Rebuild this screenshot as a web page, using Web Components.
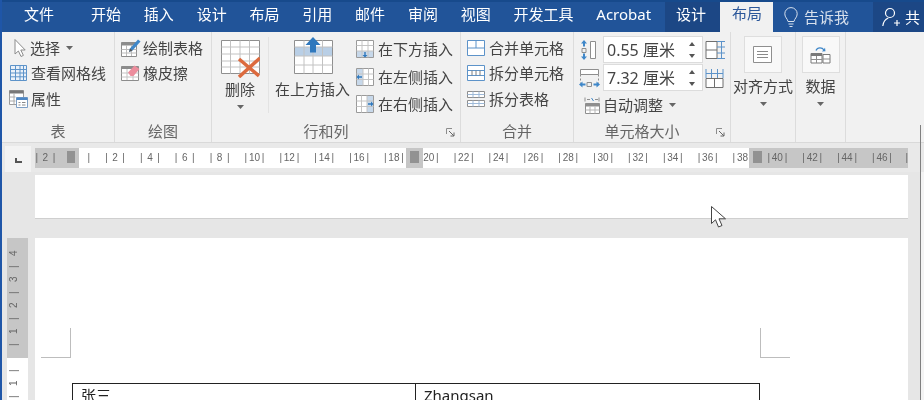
<!DOCTYPE html>
<html lang="zh">
<head>
<meta charset="utf-8">
<title>Word</title>
<style>
  html, body { margin: 0; padding: 0; background: #fff; }
  body { width: 924px; height: 400px; overflow: hidden; font-family: "Noto Sans CJK SC", "Noto Sans", sans-serif; }
  svg { display: block; }
</style>
</head>
<body>

<word-app>
  <tab-bar slot="tabs"></tab-bar>

  <ribbon-bar slot="ribbon">
    <ribbon-group label="表" style="--w:113px">
      <tool-col style="--pad:0 0 0 7px">
        <tool-btn caret style="--gap:2px">
          <svg slot="icon" width="19" height="20" viewBox="0 0 19 20"><path d="M6 1.500V16l3.400-3 2.600 5.500 2.400-1.100-2.600-5.400h4.400z" fill="#fff" stroke="#8c8c8c"/></svg>选择</tool-btn>
        <tool-btn>
          <svg slot="icon" width="19" height="18" viewBox="0 0 19 18"><path d="M1.500 1.500h16v15h-16z" fill="#eaf1f9" stroke="#5d93c9"/><path d="M1.500 5.500h16M1.500 9h16M1.500 12.800h16M6.500 1.500v15M11 1.500v15M14.500 1.500v15" stroke="#5d93c9" fill="none"/></svg>查看网格线</tool-btn>
        <tool-btn>
          <svg slot="icon" width="19" height="20" viewBox="0 0 19 20"><path d="M.5 1.500h14v14H.5z" fill="#fff" stroke="#9a9a9a"/><path d="M.5 1.500h14v3H.5z" fill="#777"/><path d="M.5 8h6M.5 12h6M5 4.500v11" stroke="#aaa"/><path d="M7.500 8.500h11v10h-11z" fill="#fff" stroke="#7d9ec4"/><path d="M7.500 8.500h11v2.500h-11z" fill="#4c86c4"/><path d="M9.500 13.500h2M13 13.500h3.500M9.500 16h2M13 16h3.500" stroke="#888"/></svg>属性</tool-btn>
      </tool-col>
    </ribbon-group>

    <ribbon-group label="绘图" style="--w:97px">
      <tool-col style="--pad:0 0 0 6px">
        <tool-btn style="--gap:2px">
          <svg slot="icon" width="20" height="20" viewBox="0 0 20 20"><path d="M.5 4.500h15v14H.5z" fill="#fff" stroke="#8c8c8c"/><path d="M.5 4.500h15v3H.5z" fill="#8c8c8c"/><path d="M.5 11.500h15M.5 15h15M5.500 7v11M10.500 7v11" stroke="#bbb"/><path d="M8 14l1-3.500L17 1.500l2.500 2-8 9z" fill="#3f87c9"/><path d="M8 14l1-3.500 2.500 2z" fill="#555"/></svg>绘制表格</tool-btn>
        <tool-btn style="--gap:2px">
          <svg slot="icon" width="20" height="18" viewBox="0 0 20 18"><path d="M.5 2.500h17v14H.5z" fill="#fff" stroke="#8c8c8c"/><path d="M.5 2.500h17v2.500H.5z" fill="#8c8c8c"/><path d="M.5 9h17M.5 13h17M6 5v11M12 5v11" stroke="#c4c4c4"/><path d="M7 8.500L13.500 1.500l5 3.500-6 7h-3z" fill="#ec8d9d"/></svg>橡皮擦</tool-btn>
      </tool-col>
    </ribbon-group>

    <ribbon-group label="行和列" launcher style="--w:249px">
      <tool-big caret style="--w:56px;--top:8px;--tgap:1px">
        <svg slot="icon" width="40" height="38" viewBox="0 0 40 38"><path d="M1.500 .5h38v33h-38z" fill="#fff" stroke="#8f8f8f"/><path d="M1.500 7h38M1.500 14h38M1.500 21h38M1.500 27h38M10.500 .5v33M20 .5v33M29.500 .5v33" stroke="#c2c2c2" fill="none"/><path d="M19 19l20 17M40 18L19 37" stroke="#dc6a3e" stroke-width="3.500"/></svg>删除</tool-big>
      <i style="display:block;width:1px;height:76px;margin-top:5px;background:#e3e3e3"></i>
      <tool-big style="--w:87px;--top:5px;--tgap:4px">
        <svg slot="icon" width="40" height="38" viewBox="0 0 40 38"><path d="M1.500 3.500h38v33h-38z" fill="#fff" stroke="#8f8f8f"/><path d="M2 10h37v9H2z" fill="#b9cfe6"/><path d="M1.500 10h38M1.500 19h38M1.500 28h38M11 3.500v33M20 3.500v33M29.500 3.500v33" stroke="#c2c2c2" fill="none"/><path d="M20 0l7.500 8H23v7.500h-6V8h-4.500z" fill="#2f78bd"/></svg>在上方插入</tool-big>
      <tool-col style="--pad:0 0 0 0;--row:27.500px;--pt:3.500px">
        <tool-btn style="--gap:4px">
          <svg slot="icon" width="18" height="20" viewBox="0 0 18 20"><path d="M.5 1.500h17v17H.5z" fill="#fff" stroke="#9a9a9a"/><path d="M1 12h16v6H1z" fill="#c7d8ea"/><path d="M.5 6.500h17M.5 12h17M6 1.500v17M12 1.500v17" stroke="#c4c4c4"/><path d="M9 18.500l-2.500-2.500H8.300v-3h1.400v3h1.800z" fill="#2f78bd"/></svg>在下方插入</tool-btn>
        <tool-btn style="--gap:4px">
          <svg slot="icon" width="18" height="20" viewBox="0 0 18 20"><path d="M.5 1.500h17v17H.5z" fill="#fff" stroke="#9a9a9a"/><path d="M1 2h6v16H1z" fill="#c7d8ea"/><path d="M.5 7h17M.5 12.500h17M7 1.500v17M12.500 1.500v17" stroke="#c4c4c4"/><path d="M.5 10L3 7.500v1.800h3v1.400H3v1.800z" fill="#2f78bd"/></svg>在左侧插入</tool-btn>
        <tool-btn style="--gap:4px">
          <svg slot="icon" width="18" height="20" viewBox="0 0 18 20"><path d="M.5 1.500h17v17H.5z" fill="#fff" stroke="#9a9a9a"/><path d="M11 2h6v16h-6z" fill="#c7d8ea"/><path d="M.5 7h17M.5 12.500h17M5.500 1.500v17M11 1.500v17" stroke="#c4c4c4"/><path d="M17.500 10L15 7.500v1.800h-3v1.400h3v1.800z" fill="#2f78bd"/></svg>在右侧插入</tool-btn>
      </tool-col>
    </ribbon-group>

    <ribbon-group label="合并" style="--w:113px">
      <tool-col style="--pad:0 0 0 6px">
        <tool-btn style="--gap:4px">
          <svg slot="icon" width="18" height="18" viewBox="0 0 18 18"><path d="M.5 1.500h17v15H.5z" fill="#fff" stroke="#5d93c9"/><path d="M.5 9h17M9 1.500V9" stroke="#5d93c9"/></svg>合并单元格</tool-btn>
        <tool-btn style="--gap:4px">
          <svg slot="icon" width="18" height="18" viewBox="0 0 18 18"><path d="M.5 1.500h17v15H.5z" fill="#fff" stroke="#5d93c9"/><path d="M.5 6.500h17M.5 11.500h17" stroke="#5d93c9"/><path d="M5 6.500v5M9 6.500v5M13 6.500v5" stroke="#7f7f7f"/></svg>拆分单元格</tool-btn>
        <tool-btn style="--gap:4px">
          <svg slot="icon" width="18" height="18" viewBox="0 0 18 18"><path d="M.5 1.500h17v6H.5zM.5 10.500h17v6H.5z" fill="#fff" stroke="#8e8e8e"/><path d="M.5 4.500h17M.5 13.500h17M6 1.500v6M12 1.500v6M6 10.500v6M12 10.500v6" stroke="#9db9d8"/></svg>拆分表格</tool-btn>
      </tool-col>
    </ribbon-group>

    <ribbon-group label="单元格大小" launcher style="--w:157px">
      <size-col>
        <size-row>
          <svg slot="before" width="22" height="22" viewBox="0 0 22 22"><path d="M11.500 2.500h5v17h-5z" fill="#fff" stroke="#8e8e8e"/><path d="M5 1l3 3.500H6v3H4v-3H2z" fill="#3f87c9"/><path d="M3 9.500h4v4H3z" fill="none" stroke="#8e8e8e"/><path d="M5 21l3-3.500H6v-3H4v3H2z" fill="#3f87c9"/></svg>
          <spin-box>0.55 厘米</spin-box>
          <svg slot="after" width="22" height="20" viewBox="0 0 22 20"><path d="M1 1.500h11v17H1zM1 10h11" fill="#fff" stroke="#6f6f6f"/><path d="M12 1.500h8M12 7h8M12 13h8M12 18.500h8M16.500 1.500v17" fill="none" stroke="#5d93c9"/></svg>
        </size-row>
        <size-row>
          <svg slot="before" width="22" height="22" viewBox="0 0 22 22"><path d="M1.500 2.500h18v5h-18z" fill="#fff" stroke="#8e8e8e"/><path d="M1.500 7.500v9M19.500 7.500v9" stroke="#8e8e8e" stroke-dasharray="2 2"/><path d="M0 17.500l3.500-3v2h3v2h-3v2zM21 17.500l-3.500-3v2h-3v2h3v2z" fill="#3f87c9"/><path d="M8 15.500h4.500v4H8z" fill="none" stroke="#8e8e8e"/></svg>
          <spin-box>7.32 厘米</spin-box>
          <svg slot="after" width="22" height="22" viewBox="0 0 22 22"><path d="M1 11.500h17v9H1zM9.500 11.500v9" fill="#fff" stroke="#6f6f6f"/><path d="M1 2v9M6.500 2v9M12.500 2v9M18 2v9M1 6.500h17" fill="none" stroke="#5d93c9"/></svg>
        </size-row>
        <tool-btn caret style="--gap:2px;--ml:4px">
          <svg slot="icon" width="18" height="18" viewBox="0 0 18 18"><path d="M2.500 7.500h14v10h-14z" fill="#fff" stroke="#8e8e8e"/><path d="M2.500 7.500h14v3h-14z" fill="#8e8e8e"/><path d="M2.500 14h14M7 10.500v7M12 10.500v7" stroke="#b5b5b5"/><path d="M2 1.500v4M16 1.500v4M4 3.500h3M12 3.500h3" stroke="#8f8f8f"/><path d="M8.500 2l2 3" stroke="#3f87c9"/></svg>自动调整</tool-btn>
      </size-col>
    </ribbon-group>

    <ribbon-group style="--w:65px">
      <tool-big caret boxed style="--w:65px;--top:4px;--tgap:3px">
        <svg slot="icon" width="20" height="18" viewBox="0 0 20 18"><path d="M.5 .5h18v16H.5z" fill="#fff" stroke="#8f8f8f"/><path d="M4 5.500h11M4 8.500h11M4 11.500h11" stroke="#8a8a8a"/></svg>对齐方式</tool-big>
    </ribbon-group>

    <ribbon-group style="--w:50px">
      <tool-big caret boxed style="--w:50px;--top:4px;--tgap:3px">
        <svg slot="icon" width="22" height="18" viewBox="0 0 22 18"><path d="M1 7.500h11v9.500H1zM13 8.500h7V17h-7z" fill="#fff" stroke="#7a7a7a"/><path d="M1 7.500h11v2.500H1z" fill="#7a7a7a"/><path d="M1 13.500h11M6.500 10v7M13 13h7" stroke="#8e8e8e"/><path d="M6 4.500C7.500 1 12 1 14 4" fill="none" stroke="#3f87c9" stroke-width="1.300"/><path d="M12 5.500l3.500-.3-.5-3.500z" fill="#3f87c9"/></svg>数据</tool-big>
    </ribbon-group>
  </ribbon-bar>

  <ruler-row slot="ruler"></ruler-row>

  <doc-area slot="doc">
    <v-ruler slot="gutter"></v-ruler>
    <doc-page style="--h:43px"></doc-page>
    <doc-page style="--h:162px;--mt:20px">
      <crop-marks></crop-marks>
      <doc-table>
        <span slot="a">张三</span>
        <span slot="b">Zhangsan</span>
      </doc-table>
    </doc-page>
  </doc-area>

  <mouse-arrow slot="overlay"></mouse-arrow>
</word-app>

<script>
const CJK = '"Noto Sans CJK SC", "Noto Sans", sans-serif';

// shared helper so every element stays short
function shadow(el, html) {
    el.attachShadow({ mode: 'open' }).innerHTML = html;
}

const caretSvg = '<svg width="7" height="4" viewBox="0 0 7 4" style="display:block"><path d="M0 0h7L3.500 4z" fill="#666"/></svg>';

class WordApp extends HTMLElement {
    constructor() {
        super();
        shadow(this, `
        <style>
            :host { display: block; position: relative; width: 924px; height: 400px; overflow: hidden; background: #e6e6e6; filter: blur(.3px); }
            .edge { display: flex; flex-direction: column; height: 400px; border-left: 2px solid #1f56a8; box-sizing: border-box; }
            .frame { position: absolute; left: 920px; top: 125px; bottom: 0; width: 1px; background: #808080; }
        </style>
        <div class="edge">
            <slot name="tabs"></slot>
            <slot name="ribbon"></slot>
            <slot name="ruler"></slot>
            <slot name="doc"></slot>
        </div>
        <div class="frame"></div>
        <slot name="overlay"></slot>`);
    }
}

class TabBar extends HTMLElement {
    constructor() {
        super();
        shadow(this, `
        <style>
            :host { display: flex; height: 32px; box-sizing: border-box; border-top: 2px solid #174a8c; background: #215499; color: #fff; font: 15px/24px ${CJK}; flex: none; }
            span { display: block; white-space: nowrap; }
            .main { width: 663px; padding-left: 22px; box-sizing: border-box; display: flex; gap: 22.800px; }
            .main span:first-child { margin-right: 14.200px; }
            .latin { font-family: "Noto Sans", sans-serif; font-size: 15px; }
            .ctx { display: flex; background: #1c4785; }
            .ctx b { font-weight: 400; display: block; padding: 0 14px 0 11px; }
            .ctx b.active { background: #f1f1f1; color: #2b579a; padding: 0 11px 0 12px; line-height: 22px; }
            .tell { width: 100px; display: flex; align-items: center; gap: 6px; padding-left: 11px; box-sizing: border-box; opacity: .82; }
            .share { flex: 1; background: #1c4785; display: flex; align-items: center; gap: 5px; padding-left: 9px; white-space: nowrap; overflow: hidden; }
        </style>
        <div class="main">
            <span>文件</span><span>开始</span><span>插入</span><span>设计</span><span>布局</span><span>引用</span><span>邮件</span><span>审阅</span><span>视图</span><span>开发工具</span><span class="latin">Acrobat</span>
        </div>
        <div class="ctx"><b>设计</b><b class="active">布局</b></div>
        <div class="tell">
            <svg width="14" height="21" viewBox="0 0 14 21" fill="none" stroke="#fff"><path d="M4 14.500C3.500 11.500.8 10.500.8 6.800a6.200 6.200 0 0 1 12.400 0c0 3.700-2.700 4.700-3.200 7.700z"/><path d="M4.500 17h5M5.500 19.500h3"/></svg>
            <span>告诉我</span>
        </div>
        <div class="share">
            <svg width="18" height="20" viewBox="0 0 18 20" fill="none" stroke="#fff" stroke-width="1.200"><circle cx="8" cy="6" r="4.500"/><path d="M.8 19c.5-4.500 3-7 5.500-8M12 16h6M15 13v6"/></svg>
            <span>共</span>
        </div>`);
    }
}

class RibbonBar extends HTMLElement {
    constructor() {
        super();
        shadow(this, `
        <style>
            :host { display: flex; height: 111px; flex: none; box-sizing: border-box; background: #f1f1f1; border-bottom: 1px solid #d9d9d9; color: #444; font: 15px/20px ${CJK}; }
        </style>
        <slot></slot>`);
    }
}

class RibbonGroup extends HTMLElement {
    constructor() {
        super();
        const hasLauncher = this.hasAttribute('launcher');
        const launcher = hasLauncher
            ? `<svg class="launch" width="9" height="9" viewBox="0 0 9 9" fill="none" stroke="#8c8c8c"><path d="M.5 6V.5H6"/><path d="M3 3l5 5M8 4.500V8H4.500" stroke="#666"/></svg>`
            : '';
        shadow(this, `
        <style>
            :host { display: flex; flex-direction: column; flex: none; width: var(--w); box-sizing: border-box; border-right: 1px solid #dcdcdc; position: relative; }
            .body { display: flex; height: 89px; }
            .label { height: 21px; line-height: 20px; text-align: center; color: #666; padding-right: ${hasLauncher ? 20 : 0}px; }
            .launch { position: absolute; right: 5px; bottom: 5px; display: block; }
        </style>
        <div class="body"><slot></slot></div>
        <div class="label">${this.getAttribute('label') || ''}</div>
        ${launcher}`);
    }
}

class ToolCol extends HTMLElement {
    constructor() {
        super();
        shadow(this, `
        <style>
            :host { display: flex; flex-direction: column; padding: var(--pad, 0); padding-top: var(--pt, 3px); }
        </style>
        <slot></slot>`);
    }
}

class ToolBtn extends HTMLElement {
    constructor() {
        super();
        const caret = this.hasAttribute('caret') ? `<span class="caret">${caretSvg}</span>` : '';
        shadow(this, `
        <style>
            :host { display: flex; align-items: center; height: var(--row, 25.500px); gap: var(--gap, 3px); margin-left: var(--ml, 0); white-space: nowrap; }
            .caret { margin-left: 4px; }
            ::slotted(svg) { display: block; flex: none; }
        </style>
        <slot name="icon"></slot><slot></slot>${caret}`);
    }
}

class ToolBig extends HTMLElement {
    constructor() {
        super();
        const boxed = this.hasAttribute('boxed');
        const caret = this.hasAttribute('caret') ? `<div class="caret">${caretSvg}</div>` : '';
        shadow(this, `
        <style>
            :host { display: flex; flex-direction: column; align-items: center; width: var(--w); padding-top: var(--top, 4px); white-space: nowrap; box-sizing: border-box; }
            .icon { display: flex; align-items: center; justify-content: center; }
            .icon.boxed { width: 38px; height: 37px; box-sizing: border-box; background: #f8f8f8; border: 1px solid #dedede; }
            .text { margin-top: var(--tgap, 3px); line-height: 20px; }
            .caret { margin-top: 6px; }
        </style>
        <div class="icon ${boxed ? 'boxed' : ''}"><slot name="icon"></slot></div>
        <div class="text"><slot></slot></div>
        ${caret}`);
    }
}

class SizeCol extends HTMLElement {
    constructor() {
        super();
        shadow(this, `
        <style>
            :host { display: flex; flex-direction: column; padding: 4px 0 0 5px; gap: 1px; }
        </style>
        <slot></slot>`);
    }
}

class SizeRow extends HTMLElement {
    constructor() {
        super();
        shadow(this, `
        <style>
            :host { display: flex; align-items: center; gap: 2px; height: 27px; }
            ::slotted(svg) { display: block; flex: none; }
        </style>
        <slot name="before"></slot><slot></slot><slot name="after"></slot>`);
    }
}

class SpinBox extends HTMLElement {
    constructor() {
        super();
        shadow(this, `
        <style>
            :host { display: flex; align-items: center; justify-content: space-between; width: 100px; height: 27px; box-sizing: border-box; padding: 0 7px 0 3px; background: #fff; border: 1px solid #dcdcdc; font-size: 16px; white-space: nowrap; font-family: "Noto Sans", ${CJK}; }
            .spin { display: flex; flex-direction: column; gap: 8px; }
            svg { display: block; }
        </style>
        <span><slot></slot></span>
        <span class="spin">
            <svg width="6" height="4" viewBox="0 0 6 4"><path d="M0 4h6L3 0z" fill="#555"/></svg>
            <svg width="6" height="4" viewBox="0 0 6 4"><path d="M0 0h6L3 4z" fill="#555"/></svg>
        </span>`);
    }
}

class RulerRow extends HTMLElement {
    constructor() {
        super();
        const nums = ['2', ''];
        for (let n = 2; n <= 46; n += 2) nums.push(String(n));
        const cells = nums.map(n => `<div class="cell"><span>|</span><span>${n}</span><span>|</span></div>`).join('');
        shadow(this, `
        <style>
            :host { display: flex; height: 29px; flex: none; background: #e9e9e9; align-items: center; padding-left: 33px; position: relative; box-sizing: border-box; }
            .corner { position: absolute; left: 3px; top: 3px; width: 26px; height: 26px; background: #f3f3f3; }
            .corner i { position: absolute; left: 10px; top: 12px; width: 7px; height: 5px; box-sizing: border-box; border-left: 2px solid #555; border-bottom: 2px solid #555; }
            .track { position: relative; width: 873px; height: 20px; overflow: hidden; margin-top: 1px; background: linear-gradient(to right, #c6c6c6 0 44px, #fff 44px 714px, #c6c6c6 714px); }
            .cells { display: flex; margin-left: -7.100px; width: 880px; }
            .cell { flex: none; width: 34.860px; display: flex; justify-content: space-between; padding: 0 7.500px; box-sizing: border-box; font: 10px/20px "Liberation Sans", sans-serif; color: #666; }
            .cell.end { width: 8.600px; padding: 0 0 0 6px; }
            .h { position: absolute; top: 0; height: 20px; background: #c6c6c6; }
            .h i { position: absolute; top: 3px; height: 12px; background: #929292; left: 4px; right: 4px; }
        </style>
        <div class="corner"><i></i></div>
        <div class="track">
            <div class="cells">${cells}<div class="cell end"><span>|</span></div></div>
            <div class="h" style="left:30px;width:14px"><i style="left:2px;right:4px"></i></div>
            <div class="h" style="left:371px;width:17px"><i></i></div>
            <div class="h" style="left:714px;width:16px"><i style="left:4px;right:3px"></i></div>
        </div>`);
    }
}

class DocArea extends HTMLElement {
    constructor() {
        super();
        shadow(this, `
        <style>
            :host { display: flex; flex: 1; min-height: 0; background: #e6e6e6; }
            .gutter { width: 33px; flex: none; padding-top: 66px; box-sizing: border-box; }
            .pages { width: 873px; flex: none; padding-top: 3px; box-sizing: border-box; }
            .rail { width: 13px; flex: none; }
            .rest { flex: 1; background: #f4f4f4; }
        </style>
        <div class="gutter"><slot name="gutter"></slot></div>
        <div class="pages"><slot></slot></div>
        <div class="rail"></div><div class="rest"></div>`);
    }
}

class VRuler extends HTMLElement {
    constructor() {
        super();
        const marks = ['4', '|', '3', '|', '2', '|', '1', '|', '', '|', '1', '|'];
        const cells = marks.map(m => `<div class="m">${m}</div>`).join('');
        shadow(this, `
        <style>
            :host { display: block; width: 21px; height: 162px; margin-left: 5px; overflow: hidden; background: linear-gradient(#c6c6c6 0 120px, #fff 120px); }
            .col { padding-top: 8.500px; }
            .m { height: 13px; font: 10px/13px "Liberation Sans", sans-serif; color: #666; text-align: center; writing-mode: vertical-rl; transform: rotate(180deg); width: 21px; }
        </style>
        <div class="col">${cells}</div>`);
    }
}

class DocPage extends HTMLElement {
    constructor() {
        super();
        shadow(this, `
        <style>
            :host { display: block; height: var(--h); margin-top: var(--mt, 0); background: #fff; box-shadow: 0 1px 0 #cfcfcf; overflow: hidden; }
            .inner { padding-top: 90px; }
        </style>
        <div class="inner"><slot></slot></div>`);
    }
}

class CropMarks extends HTMLElement {
    constructor() {
        super();
        shadow(this, `
        <style>
            :host { display: flex; justify-content: space-between; padding: 0 118px 0 6px; }
            i { display: block; width: 30px; height: 30px; box-sizing: border-box; border-bottom: 1px solid #bdbdbd; }
            .l { border-right: 1px solid #bdbdbd; }
            .r { border-left: 1px solid #bdbdbd; }
        </style>
        <i class="l"></i><i class="r"></i>`);
    }
}

class DocTable extends HTMLElement {
    constructor() {
        super();
        shadow(this, `
        <style>
            :host { display: flex; margin: 25px 0 0 37px; width: 688px; height: 60px; box-sizing: border-box; border: 1px solid #222; color: #222; font: 15px/22px "Noto Sans", ${CJK}; }
            .c { padding-left: 8px; box-sizing: border-box; }
            .a { width: 343px; border-right: 1px solid #222; }
        </style>
        <div class="c a"><slot name="a"></slot></div>
        <div class="c"><slot name="b"></slot></div>`);
    }
}

class MouseArrow extends HTMLElement {
    constructor() {
        super();
        shadow(this, `
        <style>
            :host { position: absolute; left: 711px; top: 206px; width: 16px; height: 23px; }
            svg { display: block; }
        </style>
        <svg width="16" height="23" viewBox="0 0 16 23"><path d="M.500 .500V17.500L4.500 13.800 7.500 21 11 19.500 8 12.800H14.500z" fill="#fff" stroke="#444"/></svg>`);
    }
}

customElements.define('word-app', WordApp);
customElements.define('tab-bar', TabBar);
customElements.define('ribbon-bar', RibbonBar);
customElements.define('ribbon-group', RibbonGroup);
customElements.define('tool-col', ToolCol);
customElements.define('tool-btn', ToolBtn);
customElements.define('tool-big', ToolBig);
customElements.define('size-col', SizeCol);
customElements.define('size-row', SizeRow);
customElements.define('spin-box', SpinBox);
customElements.define('ruler-row', RulerRow);
customElements.define('doc-area', DocArea);
customElements.define('v-ruler', VRuler);
customElements.define('doc-page', DocPage);
customElements.define('crop-marks', CropMarks);
customElements.define('doc-table', DocTable);
customElements.define('mouse-arrow', MouseArrow);
</script>
</body>
</html>
